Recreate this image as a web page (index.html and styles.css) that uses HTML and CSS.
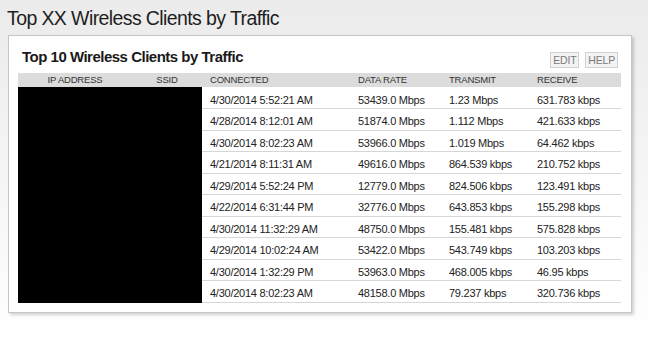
FILE: index.html
```html
<!DOCTYPE html>
<html>
<head>
<meta charset="utf-8">
<link rel="stylesheet" href="styles.css">
</head>
<body>
<h1 class="page-title">Top XX Wireless Clients by Traffic</h1>
<section class="card">
  <div class="card-head">
    <h2 class="card-title">Top 10 Wireless Clients by Traffic</h2>
    <div class="actions">
      <button class="btn">EDIT</button>
      <button class="btn">HELP</button>
    </div>
  </div>
  <table class="clients">
    <colgroup>
      <col class="c-ip"><col class="c-ssid"><col class="c-conn"><col class="c-rate"><col class="c-tx"><col class="c-rx">
    </colgroup>
    <thead>
      <tr>
        <th class="center">IP ADDRESS</th>
        <th class="center">SSID</th>
        <th>CONNECTED</th>
        <th>DATA RATE</th>
        <th>TRANSMIT</th>
        <th>RECEIVE</th>
      </tr>
    </thead>
    <tbody>
      <tr><td class="redacted" colspan="2" rowspan="10"></td><td>4/30/2014 5:52:21 AM</td><td>53439.0 Mbps</td><td>1.23 Mbps</td><td>631.783 kbps</td></tr>
      <tr><td>4/28/2014 8:12:01 AM</td><td>51874.0 Mbps</td><td>1.112 Mbps</td><td>421.633 kbps</td></tr>
      <tr><td>4/30/2014 8:02:23 AM</td><td>53966.0 Mbps</td><td>1.019 Mbps</td><td>64.462 kbps</td></tr>
      <tr><td>4/21/2014 8:11:31 AM</td><td>49616.0 Mbps</td><td>864.539 kbps</td><td>210.752 kbps</td></tr>
      <tr><td>4/29/2014 5:52:24 PM</td><td>12779.0 Mbps</td><td>824.506 kbps</td><td>123.491 kbps</td></tr>
      <tr><td>4/22/2014 6:31:44 PM</td><td>32776.0 Mbps</td><td>643.853 kbps</td><td>155.298 kbps</td></tr>
      <tr><td>4/30/2014 11:32:29 AM</td><td>48750.0 Mbps</td><td>155.481 kbps</td><td>575.828 kbps</td></tr>
      <tr><td>4/29/2014 10:02:24 AM</td><td>53422.0 Mbps</td><td>543.749 kbps</td><td>103.203 kbps</td></tr>
      <tr><td>4/30/2014 1:32:29 PM</td><td>53963.0 Mbps</td><td>468.005 kbps</td><td>46.95 kbps</td></tr>
      <tr><td>4/30/2014 8:02:23 AM</td><td>48158.0 Mbps</td><td>79.237 kbps</td><td>320.736 kbps</td></tr>
    </tbody>
  </table>
</section>
</body>
</html>
```
FILE: styles.css
```css
html, body {
  margin: 0;
  padding: 0;
}
body {
  width: 648px;
  height: 337px;
  background: linear-gradient(#ebebeb 0%, #f6f6f6 55%, #ffffff 100%);
  font-family: "Liberation Sans", Arial, sans-serif;
  color: #222;
  overflow: hidden;
}
.page-title {
  margin: 5px 0 0 7px;
  font-size: 19.5px;
  letter-spacing: -0.6px;
  line-height: 26px;
  font-weight: normal;
  color: #1e1e1e;
}
.card {
  box-sizing: border-box;
  width: 624px;
  margin: 4px 0 0 8px;
  padding: 13px 10px 9px 9px;
  background: #fff;
  border: 1px solid #c6c6c6;
  box-shadow: 2px 2px 3px rgba(0, 0, 0, 0.18);
}
.card-head {
  display: flex;
  justify-content: space-between;
  align-items: flex-start;
  margin-bottom: 5px;
}
.card-title {
  margin: 0 0 0 4px;
  font-size: 15px;
  letter-spacing: -0.5px;
  line-height: 16px;
  font-weight: bold;
  color: #1a1a1a;
}
.actions {
  display: flex;
  gap: 6px;
  margin: 3px 3px 0 0;
}
.btn {
  font-family: inherit;
  font-size: 10.5px;
  letter-spacing: -0.2px;
  line-height: 14px;
  height: 16px;
  padding: 0 2px;
  color: #7a7a7a;
  background: #f3f3f3;
  border: 1px solid #d2d2d2;
  border-radius: 0;
}
.clients {
  width: 603px;
  border-collapse: collapse;
  table-layout: fixed;
  font-size: 11px;
  letter-spacing: -0.25px;
}
.c-ip { width: 114px; }
.c-ssid { width: 70px; }
.c-conn { width: 148px; }
.c-rate { width: 91px; }
.c-tx { width: 88px; }
.c-rx { width: 92px; }
.clients th {
  background: #dcdcdc;
  font-weight: normal;
  font-size: 9.5px;
  letter-spacing: -0.2px;
  color: #333;
  text-align: left;
  height: 14px;
  padding: 0 0 0 8px;
  line-height: 14px;
}
.clients th.center {
  text-align: center;
  padding: 0;
}
.clients td {
  height: 21.5px;
  box-sizing: border-box;
  padding: 4px 0 0 8px;
  line-height: 16px;
  border-bottom: 1px solid #d6d6d6;
  white-space: nowrap;
}
.clients td.redacted {
  background: #000;
  padding: 0;
  border-bottom: 1px solid #000;
}
```
